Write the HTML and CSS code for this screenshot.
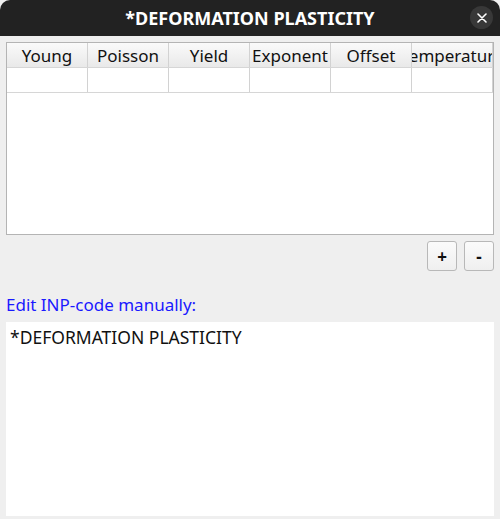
FILE: index.html
```html
<!DOCTYPE html>
<html>
<head>
<meta charset="utf-8">
<link rel="stylesheet" href="styles.css">
</head>
<body>
<div class="window">
  <div class="titlebar">
    <span class="title">*DEFORMATION PLASTICITY</span>
    <span class="close">
      <svg width="10" height="10" viewBox="0 0 10 10"><path d="M1 1L9 9M9 1L1 9" stroke="#ffffff" stroke-width="1.6" stroke-linecap="round"/></svg>
    </span>
  </div>
  <div class="content">
    <div class="table">
      <div class="row head">
        <div class="cell">Young</div>
        <div class="cell">Poisson</div>
        <div class="cell">Yield</div>
        <div class="cell">Exponent</div>
        <div class="cell">Offset</div>
        <div class="cell">Temperature</div>
      </div>
      <div class="row data">
        <div class="cell"></div>
        <div class="cell"></div>
        <div class="cell"></div>
        <div class="cell"></div>
        <div class="cell"></div>
        <div class="cell"></div>
      </div>
    </div>
    <div class="buttons">
      <button class="btn">+</button>
      <button class="btn">-</button>
    </div>
    <div class="label">Edit INP-code manually:</div>
    <div class="editor">*DEFORMATION PLASTICITY</div>
  </div>
</div>
</body>
</html>
```
FILE: styles.css
```css
html, body {
  margin: 0;
  padding: 0;
  background: #efefef;
  font-family: "Noto Sans", "Open Sans", sans-serif;
}
.window {
  width: 500px;
  height: 519px;
  display: flex;
  flex-direction: column;
}
.titlebar {
  height: 36px;
  background: #222222;
  border-radius: 10px 10px 0 0;
  display: flex;
  align-items: center;
  justify-content: center;
  position: relative;
}
.title {
  color: #ffffff;
  font-weight: bold;
  font-size: 18px;
}
.close {
  position: absolute;
  right: 7px;
  top: 6px;
  width: 23px;
  height: 23px;
  border-radius: 50%;
  background: #383838;
  display: flex;
  align-items: center;
  justify-content: center;
}
.content {
  padding: 6px 6px 3px 6px;
  display: flex;
  flex-direction: column;
  flex: 1;
}
.table {
  height: 191px;
  border: 1px solid #b4b4b4;
  background: #ffffff;
  overflow: hidden;
}
.row {
  display: flex;
  height: 24px;
  border-bottom: 1px solid #d6d6d6;
  width: 486px;
}
.row.head {
  background: linear-gradient(#fafafa, #e9e9e9);
}
.cell {
  width: 80px;
  flex: none;
  border-right: 1px solid #d2d2d2;
  display: flex;
  align-items: center;
  justify-content: center;
  font-size: 17px;
  color: #111111;
  overflow: hidden;
  white-space: nowrap;
}
.buttons {
  display: flex;
  justify-content: flex-end;
  gap: 7px;
  margin-top: 6px;
}
.btn {
  width: 30px;
  height: 30px;
  border: 1px solid #b8b8b8;
  border-radius: 3px;
  background: linear-gradient(#fbfbfb, #efefef);
  font-family: "Noto Sans", sans-serif;
  font-size: 17px;
  font-weight: bold;
  color: #111111;
  padding: 0;
  margin: 0;
}
.label {
  margin-top: 22px;
  color: #1a1aff;
  font-size: 17px;
  height: 29px;
}
.editor {
  flex: 1;
  background: #ffffff;
  padding: 3px 4px;
  font-size: 17.5px;
  color: #111111;
}
```
